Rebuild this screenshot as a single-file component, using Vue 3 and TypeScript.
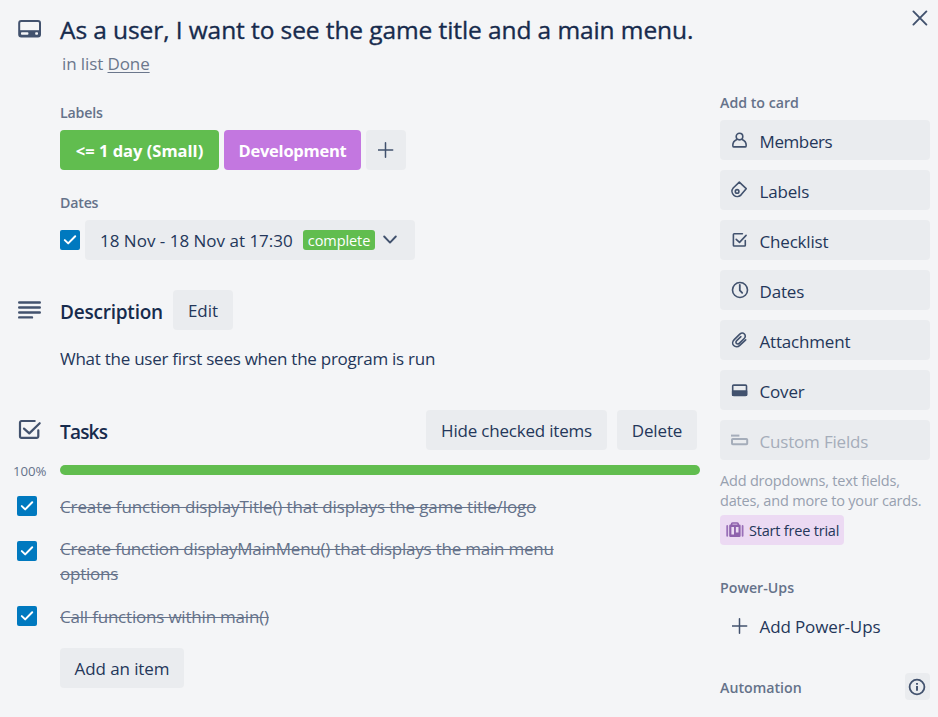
<script setup lang="ts">
interface Task {
  text: string
  cls: string
}

interface SideAction {
  name: string
  icon: string
  cls?: string
  disabled?: boolean
}

const tasks: Task[] = [
  { text: 'Create function displayTitle() that displays the game title/logo', cls: 'first' },
  { text: 'Create function displayMainMenu() that displays the main menu options', cls: 'double' },
  { text: 'Call functions within main()', cls: 'last' },
]

const actions: SideAction[] = [
  { name: 'Members', icon: 'member', cls: 'tight' },
  { name: 'Labels', icon: 'label' },
  { name: 'Checklist', icon: 'checklist' },
  { name: 'Dates', icon: 'clock' },
  { name: 'Attachment', icon: 'attachment' },
  { name: 'Cover', icon: 'cover' },
  { name: 'Custom Fields', icon: 'fields', disabled: true },
]

const progress = 100
</script>

<template>
  <div class="card">
    <main class="main">
      <header class="row title-row">
        <div class="gutter">
          <svg class="ico-card" width="24" height="20" viewBox="0 0 24 20">
            <rect x="1.2" y="2" width="20.8" height="15.6" rx="2" fill="none" stroke="currentColor" stroke-width="2" />
            <path d="M1 11.2H22V17H1Z" fill="currentColor" />
            <rect x="3" y="13.2" width="7.4" height="2.5" rx=".8" fill="#f4f5f7" />
            <rect x="17.2" y="13.2" width="2.8" height="2.5" rx=".8" fill="#f4f5f7" />
          </svg>
        </div>
        <h1>As a user, I want to see the game title and a main menu.</h1>
      </header>
      <p class="in-list">in list <a>Done</a></p>

      <section class="indent">
        <h3 class="small-head">Labels</h3>
        <div class="chips">
          <span class="chip green">&lt;= 1 day (Small)</span>
          <span class="chip purple">Development</span>
          <button class="btn plus">
            <svg width="16" height="16" viewBox="0 0 16 16"><path d="M7.5.8V15.2M.3 8H14.7" stroke="currentColor" stroke-width="1.5" stroke-linecap="round" /></svg>
          </button>
        </div>
        <h3 class="small-head dates-head">Dates</h3>
        <div class="dates">
          <span class="check"><svg width="20" height="20" viewBox="0 0 20 20"><path d="M4.8 10.1 8.2 13.4 15.2 6.3" /></svg></span>
          <button class="btn date-btn">
            <span class="date-text">18 Nov - 18 Nov at 17:30</span>
            <span class="badge">complete</span>
            <svg width="14" height="10" viewBox="0 0 14 10"><path d="M1.2 1.5 7 7.6 12.8 1.5" fill="none" stroke="currentColor" stroke-width="1.9" stroke-linecap="round" stroke-linejoin="round" /></svg>
          </button>
        </div>
      </section>

      <section>
        <div class="row desc-row">
          <div class="gutter">
            <svg class="ico-desc" width="24" height="20" viewBox="0 0 24 20"><path d="M1.2 2.5H21.8M1.2 7.5H21.8M1.2 12.5H21.8M1.2 17.4H14" stroke="currentColor" stroke-width="2.4" stroke-linecap="round" /></svg>
          </div>
          <h2>Description</h2>
          <button class="btn edit">Edit</button>
        </div>
        <p class="desc">What the user first sees when the program is run</p>
      </section>

      <section>
        <div class="row task-row">
          <div class="gutter">
            <svg class="ico-tasks" width="24" height="22" viewBox="0 0 24 22">
              <path d="M16.7 2H3.6A1.5 1.5 0 0 0 2 3.6V17.3A1.6 1.6 0 0 0 3.6 18.9H18.7A1.6 1.6 0 0 0 20.3 17.3V11.3M6 9.6 11.3 14.4 21.7 4.2" fill="none" stroke="currentColor" stroke-width="2.2" stroke-linecap="round" stroke-linejoin="round" />
            </svg>
          </div>
          <h2 class="tasks-title">Tasks</h2>
          <button class="btn hide">Hide checked items</button>
          <button class="btn delete">Delete</button>
        </div>
        <div class="progress">
          <span class="pct">{{ progress }}%</span>
          <div class="track"><div class="fill" :style="{ width: progress + '%' }"></div></div>
        </div>
        <ul class="tasks">
          <li v-for="t in tasks" :key="t.text" :class="t.cls">
            <span class="check"><svg width="20" height="20" viewBox="0 0 20 20"><path d="M4.8 10.1 8.2 13.4 15.2 6.3" /></svg></span>
            <span class="task-text"><s>{{ t.text }}</s></span>
          </li>
        </ul>
        <button class="btn add">Add an item</button>
      </section>
    </main>

    <aside class="side">
      <div class="close">
        <svg width="16" height="16" viewBox="0 0 16 16"><path d="M1.4 1.4 14.4 14.6M14.4 1.4 1.4 14.6" stroke="currentColor" stroke-width="1.9" stroke-linecap="round" /></svg>
      </div>
      <h3 class="small-head">Add to card</h3>
      <div class="actions">
        <button v-for="a in actions" :key="a.name" class="btn action" :class="[a.cls, { disabled: a.disabled }]">
          <svg width="20" height="20" viewBox="0 0 20 20" fill="none" stroke="currentColor" stroke-width="1.6" stroke-linecap="round" stroke-linejoin="round">
            <template v-if="a.icon === 'member'">
              <circle cx="9.5" cy="6.6" r="3.3" />
              <path d="M6.8 9.4C4 10.6 2.8 12.4 2.8 15.2Q2.8 16.9 3.6 16.9H15.4Q16.2 16.9 16.2 15.2C16.2 12.4 15 10.6 12.2 9.4" />
            </template>
            <template v-else-if="a.icon === 'label'">
              <path d="M9.3 2.2 16.2 8.7 11.3 14.6C9.5 16.6 6.3 17.2 4 15.3 1.7 13.3 1.3 10.3 3.2 8Z" />
              <circle cx="7.1" cy="11.4" r="1.8" />
            </template>
            <path v-else-if="a.icon === 'checklist'" d="M12.4 3.8H4.2Q3.4 3.8 3.4 4.6V15.2Q3.4 16 4.2 16H14.5Q15.3 16 15.3 15.2V10.5M6.2 9.3 9.5 12.4 16.1 5.4" />
            <template v-else-if="a.icon === 'clock'">
              <circle cx="10" cy="10" r="7.5" />
              <path d="M9.8 4.8V10.3L12.2 12.8" stroke-width="1.8" />
            </template>
            <path v-else-if="a.icon === 'attachment'" d="M15.7 9.8 9.8 15.4C7.8 17.3 5.2 17 3.7 15.5S2.3 11.5 4.2 9.6L9.8 4.2C11.3 2.8 13.2 2.8 14.4 4S15.6 7.1 14.2 8.5L9.2 13.3C8.3 14.2 7.1 14.1 6.4 13.4S5.8 11.5 6.7 10.7L10.9 6.7" />
            <template v-else-if="a.icon === 'cover'">
              <rect x="2.7" y="5.1" width="13.8" height="10.3" rx="1" />
              <path d="M2.7 11H16.5V15.2H2.7Z" fill="currentColor" />
            </template>
            <template v-else>
              <path d="M1 5.6H9.4" stroke-width="2" stroke-linecap="butt" />
              <rect x="2" y="8.9" width="15.2" height="5.4" rx=".8" stroke-width="2" />
            </template>
          </svg>
          <span>{{ a.name }}</span>
        </button>
      </div>
      <p class="hint"><span>Add dropdowns, text fields,</span><br /><span>dates, and more to your cards.</span></p>
      <button class="trial">
        <svg width="18" height="16" viewBox="0 0 18 16">
          <path d="M5.6 3V1.9Q5.6 1 6.5 1H11.3Q12.2 1 12.2 1.9V3" fill="none" stroke="#8f62ad" stroke-width="1.6" />
          <path d="M1.2 4V13.8M16.6 4V13.8" stroke="#9a70b8" stroke-width="1.8" stroke-linecap="round" />
          <rect x="3.2" y="2.6" width="11.4" height="12.4" rx="1.2" fill="#8f62ad" />
          <path d="M5.4 5H8V12.4H5.4ZM9.9 5H12.5V10.6H9.9Z" fill="#ecdcf3" />
        </svg>
        <span>Start free trial</span>
      </button>
      <h3 class="small-head power">Power-Ups</h3>
      <div class="add-power">
        <svg width="16" height="16" viewBox="0 0 16 16"><path d="M7.5.8V15.2M.3 8H14.7" stroke="currentColor" stroke-width="1.5" stroke-linecap="round" /></svg>
        <span>Add Power-Ups</span>
      </div>
      <div class="auto">
        <h3 class="small-head">Automation</h3>
        <span class="info">
          <svg width="18" height="18" viewBox="0 0 18 18"><circle cx="9" cy="9" r="7.4" fill="none" stroke="currentColor" stroke-width="1.8" /><path d="M9 8V12.8M9 4.9V6.7" stroke="currentColor" stroke-width="1.9" /></svg>
        </span>
      </div>
    </aside>
  </div>
</template>

<style>
body {
  margin: 0;
  background: #f4f5f7;
}
</style>

<style scoped>
* {
  box-sizing: border-box;
}
.card {
  display: flex;
  gap: 20px;
  width: 938px;
  height: 717px;
  overflow: hidden;
  background: #f4f5f7;
  color: #24375a;
  font: 400 17px/25px 'Open Sans', 'Noto Sans', sans-serif;
}
h1,
h2,
h3,
p,
ul {
  margin: 0;
  padding: 0;
}
svg {
  display: block;
  flex: none;
}
.main {
  width: 700px;
  flex: none;
}
.row {
  display: flex;
  align-items: center;
}
.gutter {
  width: 60px;
  flex: none;
  color: #42526e;
}
.title-row {
  height: 30px;
  margin-top: 15px;
}
.ico-card {
  margin: 0 0 2px 18px;
}
h1 {
  color: #172b4d;
  font-size: 24.5px;
  font-weight: 500;
  line-height: 30px;
  letter-spacing: -0.09px;
  white-space: nowrap;
  -webkit-text-stroke: 0.35px #172b4d;
}
.in-list {
  margin: 6px 0 0 62px;
  line-height: 25px;
  letter-spacing: -0.1px;
  color: #6b778c;
}
.in-list a {
  text-decoration: underline;
  text-underline-offset: 2px;
  text-decoration-thickness: 1px;
}
.indent {
  padding-left: 60px;
}
.small-head {
  font-size: 14.2px;
  font-weight: 600;
  line-height: 25px;
  height: 25px;
  color: #65728a;
}
.indent .small-head {
  margin-top: 24px;
  letter-spacing: -0.2px;
}
.indent .dates-head {
  margin-top: 20px;
}
.chips,
.dates {
  display: flex;
  align-items: center;
  gap: 5px;
  margin-top: 5px;
}
.chip {
  height: 40px;
  line-height: 41px;
  border-radius: 4px;
  text-align: center;
  color: #fff;
  font-size: 16.5px;
  font-weight: 700;
}
.green {
  width: 159px;
  background: #61bd4f;
}
.purple {
  width: 137px;
  background: #c377e0;
  letter-spacing: -0.25px;
}
.btn {
  display: flex;
  align-items: center;
  justify-content: center;
  height: 40px;
  padding: 0;
  border: 0;
  border-radius: 4px;
  background: #eaecef;
  color: inherit;
  font: inherit;
  letter-spacing: inherit;
  line-height: 38px;
  white-space: nowrap;
}
.edit,
.hide,
.delete,
.add {
  padding-top: 2px;
}
.plus {
  width: 40px;
  color: #42526e;
}
.check {
  width: 20px;
  height: 20px;
  flex: none;
  border-radius: 2px;
  background: #0079bf;
}
.check path {
  fill: none;
  stroke: #fff;
  stroke-width: 2;
  stroke-linecap: round;
  stroke-linejoin: round;
}
.date-btn {
  width: 330px;
  padding-left: 15px;
  justify-content: flex-start;
}
.date-text {
  width: 203px;
  padding-top: 2px;
  text-align: left;
}
.badge {
  width: 72px;
  height: 20px;
  margin-right: 8px;
  border-radius: 3px;
  background: #61bd4f;
  color: #fff;
  font-size: 14.5px;
  line-height: 21px;
  letter-spacing: -0.08px;
  text-align: center;
}
.date-btn svg {
  color: #42526e;
}
.desc-row {
  height: 40px;
  margin-top: 30px;
}
.ico-desc {
  margin-left: 18px;
}
h2 {
  color: #172b4d;
  font-size: 19px;
  font-weight: 600;
  line-height: 36px;
  letter-spacing: -0.22px;
  padding-top: 4px;
}
.edit {
  width: 60px;
  margin-left: 10px;
}
.desc-row h2 {
  width: 103px;
}
.desc {
  margin: 16px 0 0 60px;
  letter-spacing: -0.26px;
}
.task-row {
  height: 40px;
  margin-top: 39px;
}
.ico-tasks {
  margin-left: 18px;
}
.tasks-title {
  margin-right: auto;
  letter-spacing: -0.8px;
}
.hide {
  width: 181px;
  margin-right: 10px;
  letter-spacing: -0.2px;
}
.delete {
  width: 80px;
  margin-right: 3px;
  letter-spacing: -0.15px;
}
.progress {
  display: flex;
  align-items: center;
  height: 10px;
  margin-top: 15px;
}
.pct {
  width: 47px;
  margin: 1px 0 0 13px;
  color: #65728a;
  font-size: 13.2px;
  line-height: 16px;
}
.track {
  width: 640px;
  height: 10px;
  border-radius: 5px;
  overflow: hidden;
  background: #dfe1e6;
}
.fill {
  height: 100%;
  background: #61bd4f;
}
.tasks {
  list-style: none;
  margin-top: 19px;
}
.tasks li {
  display: flex;
  align-items: flex-start;
  padding-left: 17px;
}
.tasks .check {
  margin-top: 2px;
}
.task-text {
  width: 515px;
  margin-left: 23px;
  color: #65728a;
}
.task-text s {
  text-decoration-thickness: 1px;
}
.tasks .first {
  height: 42px;
  letter-spacing: -0.12px;
}
.tasks .double {
  height: 68px;
  letter-spacing: -0.22px;
}
.tasks .double .check {
  margin-top: 5px;
}
.tasks .last {
  height: 44px;
  letter-spacing: -0.2px;
}
.add {
  width: 124px;
  margin-left: 60px;
  letter-spacing: -0.1px;
}
.side {
  width: 210px;
  flex: none;
}
.close {
  display: flex;
  justify-content: flex-end;
  height: 26px;
  padding-top: 10px;
  margin: 0 2px 64px 0;
  color: #42526e;
}
.actions {
  display: flex;
  flex-direction: column;
  gap: 10px;
  margin-top: 5px;
}
.action {
  justify-content: flex-start;
  padding-left: 10px;
  gap: 9.5px;
  letter-spacing: -0.18px;
}
.action svg {
  color: #42526e;
}
.action span {
  padding-top: 3px;
}
.tight {
  letter-spacing: -0.4px;
}
.disabled,
.action.disabled svg {
  color: #a5adba;
}
.hint {
  margin-top: 11px;
  font-size: 14.5px;
  line-height: 20px;
  letter-spacing: -0.19px;
  color: #97a0af;
  white-space: nowrap;
}
.trial {
  display: flex;
  align-items: center;
  gap: 5px;
  width: 124px;
  height: 30px;
  margin-top: 4px;
  padding: 0 0 0 6px;
  border: 0;
  border-radius: 4px;
  background: #ecdaf3;
  color: inherit;
  font: 400 14.5px/28px 'Open Sans', 'Noto Sans', sans-serif;
  letter-spacing: -0.2px;
  white-space: nowrap;
}
.trial span {
  padding-top: 2px;
}
.power {
  margin-top: 30px;
}
.add-power {
  display: flex;
  align-items: center;
  gap: 11.5px;
  height: 40px;
  margin-top: 6px;
  padding-left: 12px;
  letter-spacing: -0.12px;
}
.add-power svg {
  color: #42526e;
}
.auto {
  display: flex;
  align-items: center;
  justify-content: space-between;
  height: 27px;
  margin-top: 27px;
}
.auto .small-head {
  height: 27px;
  padding-top: 2px;
}
.info {
  display: flex;
  align-items: center;
  justify-content: center;
  width: 25px;
  height: 27px;
  padding-right: 1px;
  border-radius: 4px;
  background: #eaecef;
  color: #42526e;
}
</style>
